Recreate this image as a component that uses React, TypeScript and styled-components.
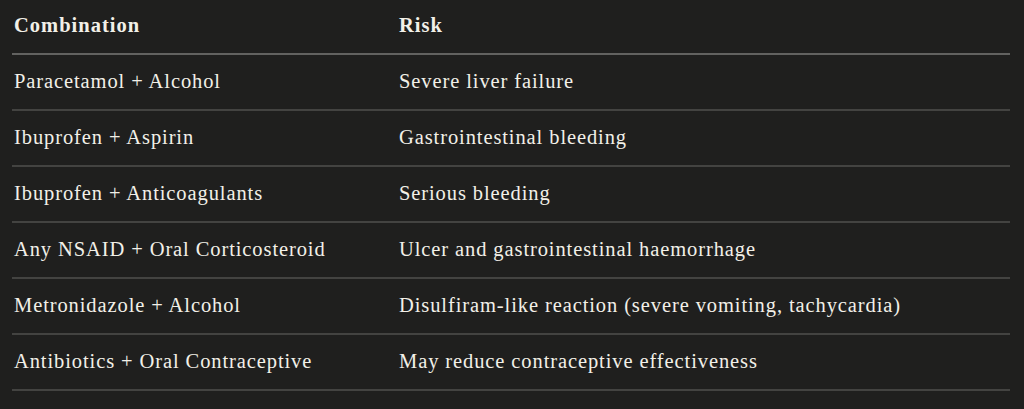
import React from "react";
import styled, { createGlobalStyle } from "styled-components";

const Global = createGlobalStyle`
  html, body {
    margin: 0;
    padding: 0;
    background: #1f1f1e;
  }
  body {
    font-family: "Liberation Serif", "DejaVu Serif", serif;
    color: #f2f0e8;
  }
`;

const Page = styled.div`
  padding: 0 14px 0 12px;
  width: 1024px;
  box-sizing: border-box;
`;

const Table = styled.div`
  display: grid;
  grid-template-columns: 385px 1fr;
  width: 998px;
`;

const HeadCell = styled.div`
  height: 55px;
  box-sizing: border-box;
  display: flex;
  align-items: center;
  padding: 0 0 2px 2px;
  font-weight: 700;
  font-size: 20.5px;
  letter-spacing: 1px;
  border-bottom: 2px solid #626260;
`;

const Cell = styled.div`
  height: 56px;
  box-sizing: border-box;
  display: flex;
  align-items: center;
  padding: 0 0 1px 2px;
  font-size: 20.5px;
  letter-spacing: 0.9px;
  border-bottom: 2px solid #434341;
`;

const rows: [string, string][] = [
  ["Paracetamol + Alcohol", "Severe liver failure"],
  ["Ibuprofen + Aspirin", "Gastrointestinal bleeding"],
  ["Ibuprofen + Anticoagulants", "Serious bleeding"],
  ["Any NSAID + Oral Corticosteroid", "Ulcer and gastrointestinal haemorrhage"],
  ["Metronidazole + Alcohol", "Disulfiram-like reaction (severe vomiting, tachycardia)"],
  ["Antibiotics + Oral Contraceptive", "May reduce contraceptive effectiveness"],
];

export default function App() {
  return (
    <>
      <Global />
      <Page>
        <Table>
          <HeadCell>Combination</HeadCell>
          <HeadCell>Risk</HeadCell>
          {rows.map(([a, b]) => (
            <React.Fragment key={a}>
              <Cell>{a}</Cell>
              <Cell>{b}</Cell>
            </React.Fragment>
          ))}
        </Table>
      </Page>
    </>
  );
}
